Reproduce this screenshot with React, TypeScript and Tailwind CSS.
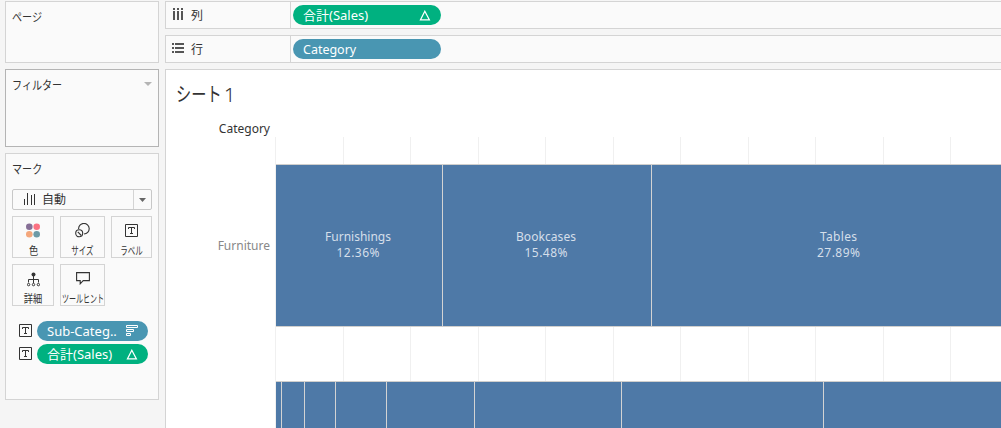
import type { ReactNode } from 'react';
import clsx from 'clsx';

type Segment = { end: number; name?: string; value?: string; labelX?: number; nameWidth?: number };

const GRID = [0, 68, 135, 203, 270, 338, 405, 473, 540, 608, 675];

const FURNITURE: Segment[] = [
    { end: 167, name: 'Furnishings', value: '12.36%', labelX: 83, nameWidth: 66 },
    { end: 376, name: 'Bookcases', value: '15.48%', labelX: 271, nameWidth: 60 },
    { end: 740, name: 'Tables', value: '27.89%', labelX: 563.5, nameWidth: 37 },
];

const SUPPLIES: Segment[] = [
    { end: 6 }, { end: 29 }, { end: 60 }, { end: 111 }, { end: 199 }, { end: 346 }, { end: 548 }, { end: 740 },
];

function Card({ title, className, children }: { title: string; className?: string; children?: ReactNode }) {
    return (
        <section className={clsx('w-[154px] shrink-0 border bg-[#fafafa]', className)}>
            <h2 className="ml-1.5 mt-2 h-4 w-max origin-left scale-x-[.84] text-[12px] leading-4">{title}</h2>
            {children}
        </section>
    );
}

function TextIcon() {
    return (
        <svg width="13" height="13" viewBox="0 0 13 13" fill="none" stroke="#333">
            <path d="M.5.5h12v12H.5z" />
            <path d="M3.5 5V3.5h6V5M6.5 3.5v6M5 9.5h3" />
        </svg>
    );
}

function DeltaIcon() {
    return (
        <svg width="12" height="11" viewBox="0 0 12 11" fill="none" stroke="#fff" strokeWidth="1.2">
            <path d="M5.8 1.2 1.4 9.9h9z" />
        </svg>
    );
}

function SortIcon() {
    return (
        <svg className="-mt-0.5" width="12" height="11" viewBox="0 0 12 11" fill="none" stroke="#fff">
            <path d="M.5.5h11v2H.5zM.5 4.5h7v2h-7zM.5 8.5h4v2h-4z" />
        </svg>
    );
}

function Pill({ color, className, textClass, icon, children }: { color: 'green' | 'blue'; className?: string; textClass?: string; icon?: ReactNode; children: ReactNode }) {
    return (
        <div
            className={clsx(
                'flex h-5 items-center justify-between rounded-full pl-2.5 pr-[10px] text-[13px] text-white',
                color === 'green' ? 'bg-[#00b180]' : 'bg-[#4996b2]',
                className,
            )}
        >
            <span className={clsx('w-max origin-left whitespace-nowrap pt-px leading-[19px]', textClass)}>{children}</span>
            {icon}
        </div>
    );
}

function Shelf({ icon, label, children }: { icon: ReactNode; label: string; children: ReactNode }) {
    return (
        <div className="flex h-7 border border-r-0 border-[#d4d4d4] bg-[#fafafa]">
            <div className="flex w-[125px] items-center border-r border-[#d4d4d4] pl-1.5 text-[12px]">
                {icon}
                <span className="ml-[7px] pt-0.5">{label}</span>
            </div>
            <div className="pl-0.5 pt-[3px]">{children}</div>
        </div>
    );
}

function MarkButton({ label, className, labelClass, children }: { label: string; className: string; labelClass?: string; children: ReactNode }) {
    return (
        <button className={clsx('flex h-[42px] flex-col items-center overflow-visible border border-[#d4d4d4] bg-[#fafafa]', className)}>
            <span className="flex h-[27px] items-center justify-center">{children}</span>
            <span className={clsx('whitespace-nowrap text-[11px] leading-[13px]', labelClass)}>{label}</span>
        </button>
    );
}

function BarRow({ segments, y, height }: { segments: Segment[]; y: number; height: number }) {
    return (
        <g>
            <rect x="1" y={y} width="740" height={height} fill="#4e79a7" />
            <path d={`M1 ${y - 0.5}H740M1 ${y + height + 0.5}H740`} stroke="#d0cfcd" />
            {segments.map((s) => (
                <g key={s.end}>
                    <path d={`M${s.end + 0.5} ${y}V${y + height}`} stroke="#d3d3d3" />
                    {s.name && (
                        <g fill="#d5dfea" fontSize="12" textAnchor="middle">
                            <text x={s.labelX} y={y + 76} textLength={s.nameWidth}>{s.name}</text>
                            <text x={s.labelX} y={y + 92} textLength="43">{s.value}</text>
                        </g>
                    )}
                </g>
            ))}
        </g>
    );
}

function Chart() {
    return (
        <svg width="726" height="292" viewBox="0 0 726 292">
            {GRID.map((x) => (
                <path key={x} d={`M${x + 0.5} 1V292`} stroke="#f0f0f0" />
            ))}
            <BarRow segments={FURNITURE} y={29} height={161} />
            <BarRow segments={SUPPLIES} y={246} height={80} />
        </svg>
    );
}

export default function App() {
    return (
        <div className="flex h-[428px] w-[1001px] gap-1.5 overflow-hidden bg-[#f5f5f5] pl-[5px] pt-px font-['Noto_Sans','Noto_Sans_CJK_JP',sans-serif] text-[#333]">
            <aside className="flex w-[154px] shrink-0 flex-col">
                <Card title="ページ" className="h-[62px] border-[#d4d4d4]" />
                <Card title="フィルター" className="relative mt-1.5 h-[78px] border-[#b4b4b4]">
                    <svg className="absolute right-1.5 top-3" width="8" height="4" viewBox="0 0 8 4">
                        <path d="M0 0h8L4 4z" fill="#b4b4b4" />
                    </svg>
                </Card>
                <Card title="マーク" className="mt-1.5 h-[247px] border-[#d4d4d4]">
                    <div className="ml-1.5 mt-[11px] flex h-[21px] w-[140px] items-center rounded-[2px] border border-[#c8c8c8] bg-[#fafafa]">
                        <svg className="-mt-px ml-[11px]" width="11" height="12" viewBox="0 0 11 12" stroke="#333">
                            <path d="M.5 6v6M3.500 0v12M7.500 2v10M10.500 1v11" />
                        </svg>
                        <span className="ml-[7px] pt-px text-[12px] leading-[18px]">自動</span>
                        <span className="ml-auto flex h-full w-[18px] items-center justify-center border-l border-[#d4d4d4]">
                            <svg width="7" height="4" viewBox="0 0 7 4">
                                <path d="M0 0h7L3.500 4z" fill="#666" />
                            </svg>
                        </span>
                    </div>
                    <div className="ml-1.5 mt-1.5 flex flex-wrap gap-1.5">
                        <MarkButton label="色" className="w-[42px]" labelClass="scale-x-[.84]">
                            <svg width="14" height="15" viewBox="0 0 14 15">
                                <circle cx="3.300" cy="3.700" r="3.300" fill="#866f96" />
                                <circle cx="10.700" cy="3.700" r="3.300" fill="#fb7182" />
                                <circle cx="3.300" cy="11.200" r="3.300" fill="#f4a77c" />
                                <circle cx="10.700" cy="11.200" r="3.300" fill="#6d9aa6" />
                            </svg>
                        </MarkButton>
                        <MarkButton label="サイズ" className="w-[45px]" labelClass="scale-x-[.68]">
                            <svg width="15" height="15" viewBox="0 0 15 15" fill="none" stroke="#333" strokeWidth="1.100">
                                <path d="M3.600 6A5.300 5.300 0 1 1 9 11" />
                                <circle cx="4.200" cy="10.300" r="3.500" />
                                <path d="M2.800 8.800 6.300 12.500" />
                            </svg>
                        </MarkButton>
                        <MarkButton label="ラベル" className="w-[41px]" labelClass="scale-x-[.68]">
                            <span className="pb-px"><TextIcon /></span>
                        </MarkButton>
                        <MarkButton label="詳細" className="w-[42px]" labelClass="scale-x-[.84]">
                            <svg className="mt-0.5" width="13" height="15" viewBox="0 0 13 15" fill="none" stroke="#333">
                                <circle cx="6.500" cy="2.500" r="2" fill="#333" stroke="none" />
                                <path d="M6.500 3v8M1.500 10.500v-3h10v3" />
                                <circle cx="1.600" cy="12.600" r="1.200" />
                                <circle cx="6.500" cy="12.600" r="1.200" />
                                <circle cx="11.400" cy="12.600" r="1.200" />
                            </svg>
                        </MarkButton>
                        <MarkButton label="ツールヒント" className="w-[45px]" labelClass="scale-x-[.64]">
                            <svg width="14" height="13" viewBox="0 0 14 13" fill="none" stroke="#333" strokeWidth="1.100">
                                <path d="M.6.6h12.800v8H7.200l-3 3.200V8.600H.6z" />
                            </svg>
                        </MarkButton>
                    </div>
                    <div className="ml-[13px] mt-[15px] flex flex-col gap-[3px]">
                        <div className="flex items-center gap-[5px]">
                            <span className="-mt-px"><TextIcon /></span>
                            <Pill color="blue" className="w-[111px]" icon={<SortIcon />}>Sub-Categ..</Pill>
                        </div>
                        <div className="flex items-center gap-[5px]">
                            <span className="-mt-px"><TextIcon /></span>
                            <Pill color="green" className="w-[111px]" icon={<DeltaIcon />}>合計(Sales)</Pill>
                        </div>
                    </div>
                </Card>
            </aside>
            <main className="flex min-w-0 flex-1 flex-col gap-1.5">
                <Shelf
                    label="列"
                    icon={
                        <svg className="-mt-0.5" width="12" height="12" viewBox="0 0 12 12" fill="#555">
                            <path d="M1 0h2v2H1zM5 0h2v2H5zM9 0h2v2H9zM1 3h2v9H1zM5 3h2v9H5zM9 3h2v9H9z" />
                        </svg>
                    }
                >
                    <Pill color="green" className="w-[148px]" icon={<DeltaIcon />}>合計(Sales)</Pill>
                </Shelf>
                <Shelf
                    label="行"
                    icon={
                        <svg className="-mt-0.5" width="12" height="10" viewBox="0 0 12 10" fill="#555">
                            <path d="M0 0h2v2H0zM0 4h2v2H0zM0 8h2v2H0zM3 0h9v2H3zM3 4h9v2H3zM3 8h9v2H3z" />
                        </svg>
                    }
                >
                    <Pill color="blue" className="w-[148px]" textClass="scale-x-[.96]">Category</Pill>
                </Shelf>
                <section className="flex-1 border-l border-t border-[#d4d4d4] bg-white">
                    <h1 className="ml-2.5 mt-[11px] flex h-7 items-center text-[20px] leading-7">
                        <span className="w-12 origin-left scale-x-[.76] whitespace-nowrap">シート</span>
                        <span className="font-['Noto_Sans'] font-light">1</span>
                    </h1>
                    <div className="mt-3 flex">
                        <div className="w-[109px] shrink-0 pr-[5px] text-right text-[12px] leading-4">
                            <div>Category</div>
                            <div className="mt-[101px] text-[#888]">Furniture</div>
                        </div>
                        <div className="mt-[15px]">
                            <Chart />
                        </div>
                    </div>
                </section>
            </main>
        </div>
    );
}
